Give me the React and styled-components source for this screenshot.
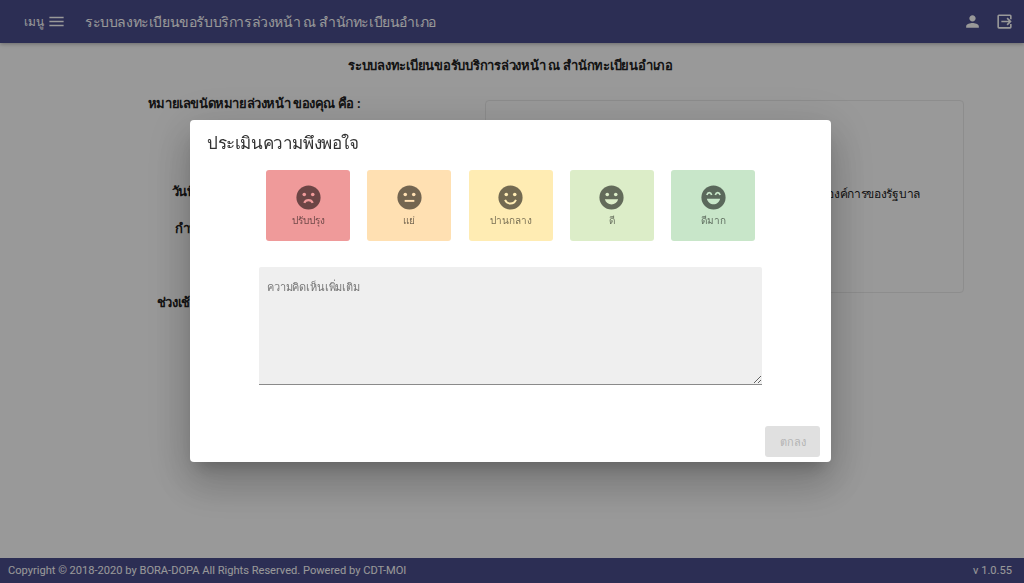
import styled, { createGlobalStyle } from "styled-components";

const GlobalStyle = createGlobalStyle`
  html, body {
    margin: 0;
    padding: 0;
    height: 100%;
  }
  body {
    font-family: Roboto, "Noto Sans", "Liberation Sans", sans-serif;
    background: #fff;
  }
  #root {
    height: 100%;
  }
`;

const Page = styled.div`
  height: 100vh;
  display: flex;
  flex-direction: column;
  overflow: hidden;
`;

const Header = styled.header`
  height: 43px;
  flex: none;
  display: flex;
  align-items: center;
  padding: 0 10px 0 24px;
  background: #4a4d8d;
  color: #fff;
  box-shadow: 0 1px 4px rgba(0, 0, 0, 0.3);
`;

const MenuLabel = styled.span`
  font-size: 12px;
`;

const MenuButton = styled.div`
  display: flex;
  align-items: center;
  gap: 3px;
  margin-right: 19px;
`;

const AppTitle = styled.div`
  flex: 1;
  font-size: 14px;
  letter-spacing: -0.4px;
`;

const HeaderActions = styled.div`
  display: flex;
  align-items: center;
  gap: 13px;
`;

const Main = styled.main`
  flex: 1;
  padding: 13px 60px 0 44px;
`;

const PageTitle = styled.h1`
  margin: 0 0 18px;
  padding-left: 13px;
  font-size: 13px;
  font-weight: 700;
  letter-spacing: -0.25px;
  line-height: 20px;
  text-align: center;
  color: #222;
`;

const Columns = styled.div`
  display: grid;
  grid-template-columns: 420px 479px;
  gap: 21px;
`;

const Labels = styled.div`
  display: flex;
  flex-direction: column;
`;

const Label = styled.div`
  margin-top: ${(p) => p.$top}px;
  font-size: 13px;
  font-weight: 700;
  letter-spacing: -0.4px;
  line-height: 20px;
  text-align: center;
  color: #222;
`;

const InfoCard = styled.div`
  height: 193px;
  margin-top: 6px;
  box-sizing: border-box;
  display: flex;
  align-items: center;
  justify-content: flex-end;
  padding: 0 43px 6px 0;
  border: 1px solid #ebebeb;
  border-radius: 4px;
  font-size: 12px;
  letter-spacing: -0.3px;
  color: #222;
`;

const Footer = styled.footer`
  height: 25px;
  flex: none;
  display: flex;
  align-items: center;
  justify-content: space-between;
  padding: 0 12px 0 8px;
  background: #4a4d8d;
  color: #fff;
  font-size: 11.1px;
`;

const Overlay = styled.div`
  position: fixed;
  inset: 0;
  display: flex;
  align-items: flex-start;
  justify-content: center;
  background: rgba(0, 0, 0, 0.4);
`;

const Dialog = styled.div`
  width: 641px;
  height: 342px;
  margin: 120px 0 0 -3px;
  box-sizing: border-box;
  display: flex;
  flex-direction: column;
  background: #fff;
  border-radius: 4px;
  box-shadow: 0 11px 15px -7px rgba(0, 0, 0, 0.2),
    0 24px 38px 3px rgba(0, 0, 0, 0.14), 0 9px 46px 8px rgba(0, 0, 0, 0.12);
`;

const DialogTitle = styled.h2`
  margin: 0;
  padding: 10px 17px 0;
  height: 50px;
  box-sizing: border-box;
  font-size: 17px;
  font-weight: 400;
  letter-spacing: -0.4px;
  line-height: 26px;
  color: #333;
`;

const Ratings = styled.div`
  display: flex;
  justify-content: center;
  gap: 17.25px;
`;

const Rating = styled.button`
  width: 84px;
  height: 71px;
  padding: 13px 0 0;
  box-sizing: border-box;
  display: flex;
  flex-direction: column;
  align-items: center;
  border: 0;
  border-radius: 3px;
  background: ${(p) => p.$bg};
  color: rgba(0, 0, 0, 0.55);
  font: inherit;
  font-size: 10px;
  line-height: 16px;
  cursor: pointer;
`;

const Face = styled.svg`
  width: 29px;
  height: 29px;
  margin-bottom: 1px;
  flex: none;
`;

const Comment = styled.textarea`
  display: block;
  width: 503px;
  height: 118px;
  margin: 26px auto 0;
  padding: 13px 8px 8px;
  box-sizing: border-box;
  border: 0;
  border-bottom: 1px solid #8a8a8a;
  border-radius: 2px 2px 0 0;
  outline: none;
  background: #efefef;
  font: inherit;
  font-size: 11px;
  letter-spacing: -0.15px;
  line-height: 16px;
  &::placeholder {
    color: #777;
    opacity: 1;
  }
`;

const DialogActions = styled.div`
  margin-top: auto;
  display: flex;
  justify-content: flex-end;
  padding: 0 11px 5px;
`;

const SubmitButton = styled.button`
  width: 55px;
  height: 31px;
  padding: 0;
  border: 0;
  border-radius: 3px;
  background: #e0e0e0;
  color: #b4b4b4;
  font: inherit;
  font-size: 11px;
`;

const MenuIcon = () => (
  <svg width="19" height="19" viewBox="0 0 24 24" fill="#fff">
    <path d="M3 18h18v-2H3v2zm0-5h18v-2H3v2zm0-7v2h18V6H3z" />
  </svg>
);

const PersonIcon = () => (
  <svg width="19" height="19" viewBox="0 0 24 24" fill="#fff">
    <path d="M12 12c2.21 0 4-1.79 4-4s-1.79-4-4-4-4 1.79-4 4 1.79 4 4 4zm0 2c-2.67 0-8 1.34-8 4v2h16v-2c0-2.66-5.33-4-8-4z" />
  </svg>
);

// box with an opening on the right, arrow going out through it
const ExitIcon = () => (
  <svg width="19" height="19" viewBox="0 0 24 24" fill="#fff">
    <path d="M5 3h14a2 2 0 0 1 2 2v4h-2V5H5v14h14v-4h2v4a2 2 0 0 1-2 2H5a2 2 0 0 1-2-2V5a2 2 0 0 1 2-2z" />
    <path d="M8 11h9.2l-2.6-2.6L16 7l5 5-5 5-1.4-1.4 2.6-2.6H8z" />
  </svg>
);

const faces = {
  bad: (bg) => (
    <>
      <circle cx="8.5" cy="9.5" r="1.5" fill={bg} />
      <circle cx="15.5" cy="9.5" r="1.5" fill={bg} />
      <path d="M8.5 16.500c.6-1.400 1.900-2.300 3.500-2.300s2.900.9 3.500 2.300" fill="none" stroke={bg} strokeWidth="1.8" />
    </>
  ),
  poor: (bg) => (
    <>
      <circle cx="8.5" cy="9.5" r="1.5" fill={bg} />
      <circle cx="15.5" cy="9.5" r="1.5" fill={bg} />
      <rect x="8" y="14" width="8" height="1.6" fill={bg} />
    </>
  ),
  fair: (bg) => (
    <>
      <circle cx="8.5" cy="9.5" r="1.5" fill={bg} />
      <circle cx="15.5" cy="9.5" r="1.5" fill={bg} />
      <path d="M7.500 14c.8 2 2.400 3 4.500 3s3.700-1 4.500-3" fill="none" stroke={bg} strokeWidth="1.6" />
    </>
  ),
  good: (bg) => (
    <>
      <circle cx="8.5" cy="9.5" r="1.5" fill={bg} />
      <circle cx="15.5" cy="9.5" r="1.5" fill={bg} />
      <path d="M6.500 13.500h11c-.7 2.600-2.900 4.300-5.500 4.300s-4.800-1.700-5.500-4.300z" fill={bg} />
    </>
  ),
  great: (bg) => (
    <>
      <path d="M6.500 10c.4-1.300 1.100-2 2-2s1.600.7 2 2M13.500 10c.4-1.300 1.100-2 2-2s1.600.7 2 2" fill="none" stroke={bg} strokeWidth="1.4" />
      <path d="M6.500 13h11c-.7 2.800-2.900 4.600-5.500 4.600s-4.800-1.800-5.500-4.600z" fill={bg} />
    </>
  ),
};

const ratings = [
  { id: "bad", label: "ปรับปรุง", bg: "#ef9a9a" },
  { id: "poor", label: "แย่", bg: "#ffe0b2" },
  { id: "fair", label: "ปานกลาง", bg: "#ffecb3" },
  { id: "good", label: "ดี", bg: "#dcedc8" },
  { id: "great", label: "ดีมาก", bg: "#c8e6c9" },
];

const App = () => {
  return (
    <>
      <GlobalStyle />
      <Page>
        <Header>
          <MenuButton>
            <MenuLabel>เมนู</MenuLabel>
            <MenuIcon />
          </MenuButton>
          <AppTitle>ระบบลงทะเบียนขอรับบริการล่วงหน้า ณ สำนักทะเบียนอำเภอ</AppTitle>
          <HeaderActions>
            <PersonIcon />
            <ExitIcon />
          </HeaderActions>
        </Header>
        <Main>
          <PageTitle>ระบบลงทะเบียนขอรับบริการล่วงหน้า ณ สำนักทะเบียนอำเภอ</PageTitle>
          <Columns>
            <Labels>
              <Label $top={0}>หมายเลขนัดหมายล่วงหน้า ของคุณ คือ :</Label>
              <Label $top={68}>วันที่นัดหมายเข้ารับบริการ คือ :</Label>
              <Label $top={17}>กำหนดเวลาเข้ารับการบริการ :</Label>
              <Label $top={54}>ช่วงเช้า เวลาทำการ 08.30 - 12.00 น.</Label>
            </Labels>
            <InfoCard>องค์การของรัฐบาล</InfoCard>
          </Columns>
        </Main>
        <Footer>
          <span>Copyright © 2018-2020 by BORA-DOPA All Rights Reserved. Powered by CDT-MOI</span>
          <span>v 1.0.55</span>
        </Footer>
      </Page>
      <Overlay>
        <Dialog>
          <DialogTitle>ประเมินความพึงพอใจ</DialogTitle>
          <Ratings>
            {ratings.map((r) => (
              <Rating key={r.id} $bg={r.bg}>
                <Face viewBox="0 0 24 24">
                  <circle cx="12" cy="12" r="10" fill="#000" fillOpacity="0.55" />
                  {faces[r.id](r.bg)}
                </Face>
                {r.label}
              </Rating>
            ))}
          </Ratings>
          <Comment placeholder="ความคิดเห็นเพิ่มเติม" />
          <DialogActions>
            <SubmitButton disabled>ตกลง</SubmitButton>
          </DialogActions>
        </Dialog>
      </Overlay>
    </>
  );
};

export default App;
